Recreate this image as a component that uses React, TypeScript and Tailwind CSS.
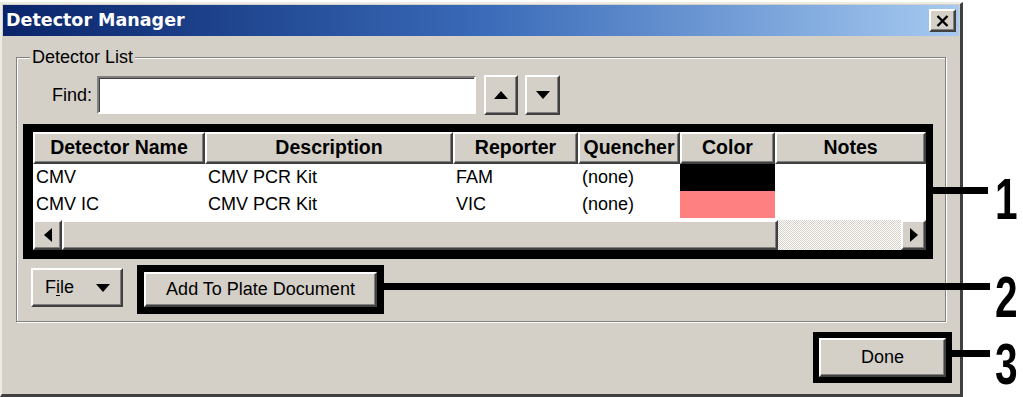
import React from "react";

const raised =
  "border-2 border-t-white border-l-white border-r-[#404040] border-b-[#404040] shadow-[inset_-1px_-1px_0_#808080] bg-[#d4d0c8]";

const columns = [
  { name: "Detector Name", w: "w-[172px]" },
  { name: "Description", w: "w-[248px]" },
  { name: "Reporter", w: "w-[125px]" },
  { name: "Quencher", w: "w-[102px]" },
  { name: "Color", w: "w-[95px]" },
  { name: "Notes", w: "flex-1" },
];

const rows = [
  { name: "CMV", desc: "CMV PCR Kit", reporter: "FAM", quencher: "(none)", color: "bg-black" },
  { name: "CMV IC", desc: "CMV PCR Kit", reporter: "VIC", quencher: "(none)", color: "bg-[#ff8080]" },
];

function Triangle({ dir }: { dir: "up" | "down" | "left" | "right" }) {
  const pts = {
    up: "0,8 7,0 14,8",
    down: "0,0 14,0 7,8",
    left: "8,0 8,14 0,7",
    right: "0,0 0,14 8,7",
  }[dir];
  const vb = dir === "up" || dir === "down" ? "0 0 14 8" : "0 0 8 14";
  const size = dir === "up" || dir === "down" ? "w-[14px] h-[8px]" : "w-[8px] h-[14px]";
  return (
    <svg viewBox={vb} className={size}>
      <polygon points={pts} fill="#000" />
    </svg>
  );
}

function Annotation({ top, left, width, label, labelTop }: { top: string; left: string; width: string; label: string; labelTop: string }) {
  return (
    <>
      <div className={`absolute h-[7px] bg-black ${top} ${left} ${width}`} />
      <div
        className={`absolute left-[995px] ${labelTop} text-[58px] leading-none font-bold text-black scale-x-[0.7] origin-left`}
      >
        {label}
      </div>
    </>
  );
}

export default function App() {
  return (
    <div className="relative w-[1023px] h-[397px] overflow-hidden bg-white font-['Liberation_Sans',Arial,sans-serif] text-black">
      <div className="mt-[2px] w-[963px] h-[395px] bg-[#d4d0c8] border-t-2 border-l-2 border-t-[#ecebe6] border-l-[#ecebe6] border-r-[3px] border-b-[3px] border-r-[#404040] border-b-[#404040] px-[1px] pt-[1px]">
        {/* title bar */}
        <div className="h-[31px] flex items-center justify-between pl-[3px] pr-[3px] bg-gradient-to-r from-[#0a246a] via-[#3a6ab8] to-[#a6caf0]">
          <span className="text-white font-bold text-[17.5px] font-['DejaVu_Sans',Verdana,sans-serif]">
            Detector Manager
          </span>
          <div className={`w-[27px] h-[23px] flex items-center justify-center ${raised}`}>
            <svg viewBox="0 0 12 12" className="w-[13px] h-[12px]">
              <path d="M1 1 L11 11 M11 1 L1 11" stroke="#000" strokeWidth="2.4" />
            </svg>
          </div>
        </div>

        {/* group box */}
        <div className="relative ml-[13px] mt-[21px] w-[930px] h-[265px] border border-[#808080] shadow-[inset_1px_1px_0_#fff,1px_1px_0_#fff]">
          <span className="absolute -top-[11px] left-[13px] px-[2px] bg-[#d4d0c8] text-[18px] leading-[20px]">
            Detector List
          </span>

          <div className="flex items-center mt-[17px] ml-[35px]">
            <span className="text-[18px] mr-[5px]">Find:</span>
            <div className="w-[379px] h-[38px] bg-white border-2 border-t-[#808080] border-l-[#808080] border-r-white border-b-white shadow-[inset_1px_1px_0_#404040]" />
            <div className={`ml-[8px] w-[34px] h-[40px] flex items-center justify-center ${raised}`}>
              <Triangle dir="up" />
            </div>
            <div className={`ml-[7px] w-[35px] h-[40px] flex items-center justify-center ${raised}`}>
              <Triangle dir="down" />
            </div>
          </div>

          {/* table, boxed by annotation 1 */}
          <div className="ml-[6px] mt-[9px] w-[910px] h-[135px] bg-black border-l-[10px] border-t-[8px] border-r-[7px] border-b-[9px] border-black">
            <div className="h-full flex flex-col bg-white">
              <div className="flex h-[32px]">
                {columns.map((c) => (
                  <div
                    key={c.name}
                    className={`${c.w} ${raised} flex items-center justify-center font-bold text-[19.5px] whitespace-nowrap overflow-hidden`}
                  >
                    {c.name}
                  </div>
                ))}
              </div>
              {rows.map((r) => (
                <div key={r.name} className="flex h-[27px] text-[18px] items-stretch">
                  <div className="w-[172px] pl-[3px] flex items-center">{r.name}</div>
                  <div className="w-[248px] pl-[3px] flex items-center">{r.desc}</div>
                  <div className="w-[125px] pl-[3px] flex items-center">{r.reporter}</div>
                  <div className="w-[102px] pl-[4px] flex items-center">{r.quencher}</div>
                  <div className={`w-[95px] ${r.color}`} />
                  <div className="flex-1" />
                </div>
              ))}
              <div className="mt-auto flex h-[30px]">
                <div className={`w-[29px] flex items-center justify-center ${raised}`}>
                  <Triangle dir="left" />
                </div>
                <div className={`w-[716px] ${raised}`} />
                <div className="flex-1 bg-[repeating-conic-gradient(#ffffff_0_25%,#d4d0c8_0_50%)] bg-[length:2px_2px]" />
                <div className={`w-[25px] flex items-center justify-center ${raised}`}>
                  <Triangle dir="right" />
                </div>
              </div>
            </div>
          </div>

          <div className="flex items-start ml-[14px] mt-[6px]">
            <div className={`mt-[3px] w-[92px] h-[39px] flex items-center pl-[12px] gap-[22px] text-[18px] ${raised}`}>
              <span>
                F<span className="underline underline-offset-2">i</span>le
              </span>
              <Triangle dir="down" />
            </div>
            <div className="ml-[14px] w-[247px] h-[49px] border-[7px] border-black">
              <div className={`h-full flex items-center justify-center text-[18px] ${raised}`}>
                Add To Plate Document
              </div>
            </div>
          </div>
        </div>

        <div className="flex justify-end pr-[7px] mt-[10px]">
          <div className="w-[139px] h-[51px] border-[6px] border-black">
            <div className={`h-full flex items-center justify-center text-[18px] ${raised}`}>Done</div>
          </div>
        </div>
      </div>

      <Annotation top="top-[187px]" left="left-[932px]" width="w-[56px]" label="1" labelTop="top-[170px]" />
      <Annotation top="top-[283px]" left="left-[384px]" width="w-[606px]" label="2" labelTop="top-[268px]" />
      <Annotation top="top-[350px]" left="left-[952px]" width="w-[38px]" label="3" labelTop="top-[335px]" />
    </div>
  );
}
